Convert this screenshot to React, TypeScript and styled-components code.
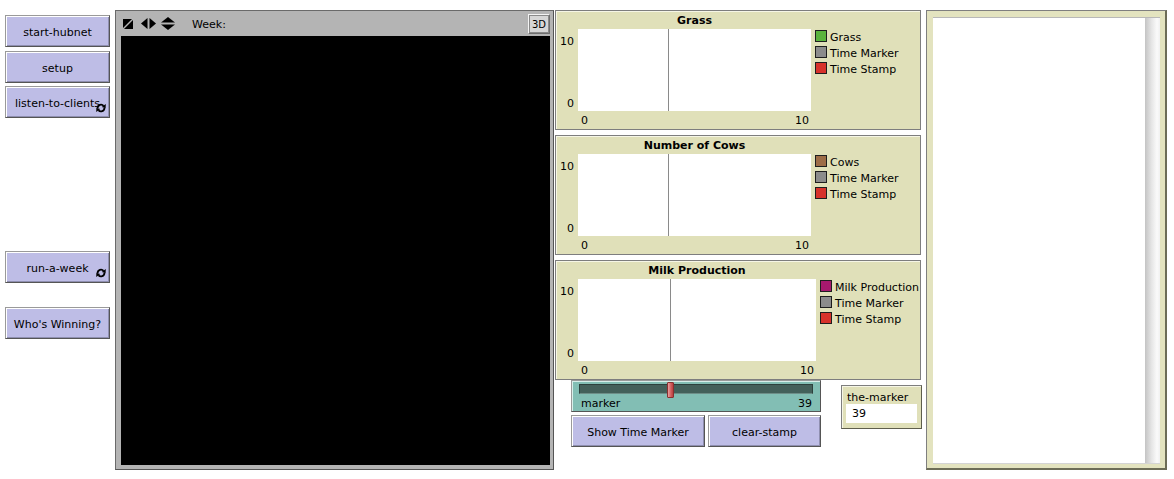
import React from 'react';
import styled, { createGlobalStyle, css } from 'styled-components';

const GlobalStyle = createGlobalStyle`
    html, body {
        margin: 0;
        padding: 0;
        background: #ffffff;
    }
    body {
        font-family: "DejaVu Sans", "Liberation Sans", sans-serif;
        font-size: 11px;
        color: #000;
    }
`

const Page = styled.div`
    display: flex;
    align-items: flex-start;
    padding-top: 10px;
    width: 1174px;
    height: 479px;
    box-sizing: border-box;
`

const ButtonColumn = styled.div`
    width: 105px;
    margin-left: 5px;
    padding-top: 5px;
    display: flex;
    flex-direction: column;
`

const raised = css`
    border: 1px solid;
    border-color: #9a9a9a #555555 #555555 #9a9a9a;
    box-shadow: inset 1px 1px 0 #ffffff, inset -1px -1px 0 #8f8fb0;
`

const NLButton = styled.div<{ $top?: number; $width?: number }>`
    position: relative;
    box-sizing: border-box;
    height: 32px;
    width: ${p => (p.$width ? `${p.$width}px` : '100%')};
    margin-top: ${p => p.$top || 0}px;
    padding-top: 3px;
    background: #bebde6;
    ${raised}
    display: flex;
    align-items: center;
    justify-content: center;
    white-space: nowrap;
    overflow: hidden;
    font-size: 11px;
`

const ForeverMark = styled.svg`
    position: absolute;
    right: 3px;
    bottom: 4px;
    width: 10px;
    height: 10px;
`

const Forever = () => (
    <ForeverMark viewBox="0 0 10 10">
        <path d="M1.6 5 A3.4 3.4 0 0 1 7.6 2.8" fill="none" stroke="#000" strokeWidth="1.8" />
        <polygon points="9.8,1 9.6,5.2 5.8,4" fill="#000" />
        <path d="M8.4 5 A3.4 3.4 0 0 1 2.4 7.2" fill="none" stroke="#000" strokeWidth="1.8" />
        <polygon points="0.2,9 0.4,4.8 4.2,6" fill="#000" />
    </ForeverMark>
)

/* ---- world view ---- */

const ViewFrame = styled.div`
    margin-left: 5px;
    width: 439px;
    height: 460px;
    box-sizing: border-box;
    border: 1px solid #6a6a6a;
    border-right-color: #555;
    border-bottom-color: #555;
    background: #b4b4b4;
    padding: 0 2px 3px 5px;
    display: flex;
    flex-direction: column;
`

const ViewHeader = styled.div`
    height: 25px;
    display: flex;
    align-items: center;
    padding-left: 2px;
`

const HeaderIcon = styled.svg<{ $gap: number }>`
    margin-right: ${p => p.$gap}px;
    display: block;
`

const WeekLabel = styled.span`
    flex: 1;
    font-size: 11px;
    margin-top: 1px;
`

const ThreeD = styled.div`
    width: 22px;
    height: 20px;
    box-sizing: border-box;
    margin-right: 1px;
    margin-top: 1px;
    padding-top: 1px;
    background: #d6d6d6;
    border: 1px solid;
    border-color: #f4f4f4 #6e6e6e #6e6e6e #f4f4f4;
    outline: 1px solid #8a8a8a;
    outline-offset: -2px;
    display: flex;
    align-items: center;
    justify-content: center;
    font-size: 10px;
`

const World = styled.div`
    width: 429px;
    height: 429px;
    background: #000;
`

/* ---- plots ---- */

const PlotColumn = styled.div`
    margin-left: 1px;
    width: 366px;
    display: flex;
    flex-direction: column;
`

const PlotBox = styled.div<{ $top?: number }>`
    box-sizing: border-box;
    height: 120px;
    margin-top: ${p => p.$top || 0}px;
    background: #e0e0b9;
    border: 1px solid #7e7e7e;
    box-shadow: inset 1px 1px 0 #f6f6e6;
    display: flex;
`

const YAxis = styled.div`
    width: 18px;
    margin-right: 4px;
    box-sizing: border-box;
    height: 100px;
    padding: 24px 0 1px;
    display: flex;
    flex-direction: column;
    justify-content: space-between;
    align-items: flex-end;
    line-height: 13px;
`

const PlotMain = styled.div<{ $w: number }>`
    width: ${p => p.$w}px;
    display: flex;
    flex-direction: column;
`

const PlotTitle = styled.div`
    height: 18px;
    line-height: 20px;
    text-align: center;
    font-weight: bold;
`

const Canvas = styled.div`
    position: relative;
    height: 82px;
    background: #ffffff;
`

const MarkerLine = styled.div`
    position: absolute;
    top: 0;
    bottom: 0;
    width: 1px;
    background: #8a8a8a;
`

const XAxis = styled.div`
    display: flex;
    justify-content: space-between;
    margin-top: 3px;
    padding: 0 2px 0 3px;
    line-height: 13px;
`

const Legend = styled.div`
    padding: 19px 0 0 4px;
    display: flex;
    flex-direction: column;
`

const LegendRow = styled.div`
    height: 16px;
    display: flex;
    align-items: flex-start;
    white-space: nowrap;
`

const Swatch = styled.span<{ $c: string }>`
    width: 12px;
    height: 12px;
    box-sizing: border-box;
    border: 1px solid #1e1e1e;
    background: ${p => p.$c};
    margin-right: 3px;
    flex: none;
`

const LegendText = styled.span`
    line-height: 13px;
    margin-top: 1px;
`

interface PlotProps {
    title: string;
    width: number;
    top?: number;
    pens: [string, string][];
}

const Plot: React.FC<PlotProps> = ({ title, width, top, pens }) => (
    <PlotBox $top={top}>
        <YAxis>
            <span>10</span>
            <span>0</span>
        </YAxis>
        <PlotMain $w={width}>
            <PlotTitle>{title}</PlotTitle>
            <Canvas>
                <MarkerLine style={{ left: `${Math.round(width * 0.386)}px` }} />
            </Canvas>
            <XAxis>
                <span>0</span>
                <span>10</span>
            </XAxis>
        </PlotMain>
        <Legend>
            {pens.map(([name, color]) => (
                <LegendRow key={name}>
                    <Swatch $c={color} />
                    <LegendText>{name}</LegendText>
                </LegendRow>
            ))}
        </Legend>
    </PlotBox>
)

/* ---- slider, buttons, monitor ---- */

const BottomRow = styled.div`
    display: flex;
    align-items: flex-start;
`

const ControlGroup = styled.div`
    margin-left: 16px;
    width: 250px;
    display: flex;
    flex-direction: column;
`

const Slider = styled.div`
    box-sizing: border-box;
    height: 32px;
    background: #82beb4;
    ${raised}
    box-shadow: inset 1px 1px 0 #d8efea;
    padding: 3px 7px 0 7px;
    display: flex;
    flex-direction: column;
`

const Track = styled.div`
    position: relative;
    height: 10px;
    background: #43605a;
    border: 1px solid #2d413d;
    border-bottom-color: #6e8e88;
    box-sizing: border-box;
`

const Knob = styled.div`
    position: absolute;
    top: -3px;
    width: 7px;
    height: 16px;
    box-sizing: border-box;
    background: linear-gradient(90deg, #e9a0a0, #d25c5c 60%, #b84040);
    border: 1px solid #8a2f2f;
    border-radius: 1px;
`

const SliderLabels = styled.div`
    display: flex;
    justify-content: space-between;
    padding: 0 1px 0 2px;
    margin-top: 3px;
    line-height: 14px;
`

const ButtonRow = styled.div`
    margin-top: 3px;
    display: flex;
    gap: 3px;
`

const Monitor = styled.div`
    margin-left: 20px;
    margin-top: 5px;
    width: 81px;
    height: 44px;
    box-sizing: border-box;
    background: #e0e0b9;
    border: 1px solid #7e7e7e;
    border-right-color: #5e5e4c;
    border-bottom-color: #5e5e4c;
    box-shadow: inset 1px 1px 0 #f6f6e6;
    padding: 4px 4px 0 4px;
    display: flex;
    flex-direction: column;
`

const MonitorLabel = styled.div`
    line-height: 15px;
    padding-left: 1px;
    height: 14px;
`

const MonitorField = styled.div`
    width: 71px;
    height: 19px;
    background: #ffffff;
    line-height: 20px;
    padding-left: 6px;
    box-sizing: border-box;
`

/* ---- output area ---- */

const OutputBox = styled.div`
    margin-left: 5px;
    width: 241px;
    height: 460px;
    box-sizing: border-box;
    border: 1px solid #7f7f7f;
    border-right: 2px solid #6c6c56;
    border-bottom: 2px solid #6c6c56;
    background: #e3e3bf;
    padding: 6px 5px 4px 6px;
    display: flex;
`

const OutputInner = styled.div`
    flex: 1;
    display: flex;
    background: #ffffff;
    border-top: 1px solid #b8b8b8;
    border-bottom: 1px solid #d4d4d4;
`

const OutputText = styled.div`
    flex: 1;
`

const ScrollTrack = styled.div`
    width: 15px;
    background: linear-gradient(90deg, #c4c4c4 0%, #e6e6e6 45%, #fafafa 80%, #f0f0f0 100%);
`

const App: React.FC = () => {
    return <>
        <GlobalStyle />
        <Page>
            <ButtonColumn>
                <NLButton>start-hubnet</NLButton>
                <NLButton $top={4}>setup</NLButton>
                <NLButton $top={3}>listen-to-clients<Forever /></NLButton>
                <NLButton $top={133}>run-a-week<Forever /></NLButton>
                <NLButton $top={24}>Who's Winning?</NLButton>
            </ButtonColumn>

            <ViewFrame>
                <ViewHeader>
                    <HeaderIcon $gap={8} width="10" height="10" viewBox="0 0 10 10">
                        <polygon points="0,0 9,0 0,9" fill="#000" />
                        <polygon points="10,1 10,10 1,10" fill="#000" />
                    </HeaderIcon>
                    <HeaderIcon $gap={5} width="15" height="11" viewBox="0 0 15 11">
                        <polygon points="0,5.5 6.5,0 6.5,11" fill="#000" />
                        <polygon points="8.5,0 15,5.5 8.5,11" fill="#000" />
                    </HeaderIcon>
                    <HeaderIcon $gap={17} width="14" height="13" viewBox="0 0 14 13">
                        <polygon points="0,5.5 7,0 14,5.5" fill="#000" />
                        <polygon points="0,7.5 14,7.5 7,13" fill="#000" />
                    </HeaderIcon>
                    <WeekLabel>Week:</WeekLabel>
                    <ThreeD>3D</ThreeD>
                </ViewHeader>
                <World />
            </ViewFrame>

            <PlotColumn>
                <Plot title="Grass" width={233}
                    pens={[['Grass', '#5ab43d'], ['Time Marker', '#8c8c8c'], ['Time Stamp', '#d7322b']]} />
                <Plot title="Number of Cows" width={233} top={5}
                    pens={[['Cows', '#9d6c47'], ['Time Marker', '#8c8c8c'], ['Time Stamp', '#d7322b']]} />
                <Plot title="Milk Production" width={238} top={5}
                    pens={[['Milk Production', '#a6196e'], ['Time Marker', '#8c8c8c'], ['Time Stamp', '#d7322b']]} />
                <BottomRow>
                    <ControlGroup>
                        <Slider>
                            <Track>
                                <Knob style={{ left: `${Math.round(234 * 0.372)}px` }} />
                            </Track>
                            <SliderLabels>
                                <span>marker</span>
                                <span>39</span>
                            </SliderLabels>
                        </Slider>
                        <ButtonRow>
                            <NLButton $width={134}>Show Time Marker</NLButton>
                            <NLButton $width={113}>clear-stamp</NLButton>
                        </ButtonRow>
                    </ControlGroup>
                    <Monitor>
                        <MonitorLabel>the-marker</MonitorLabel>
                        <MonitorField>39</MonitorField>
                    </Monitor>
                </BottomRow>
            </PlotColumn>

            <OutputBox>
                <OutputInner>
                    <OutputText />
                    <ScrollTrack />
                </OutputInner>
            </OutputBox>
        </Page>
    </>
}

export default App;
